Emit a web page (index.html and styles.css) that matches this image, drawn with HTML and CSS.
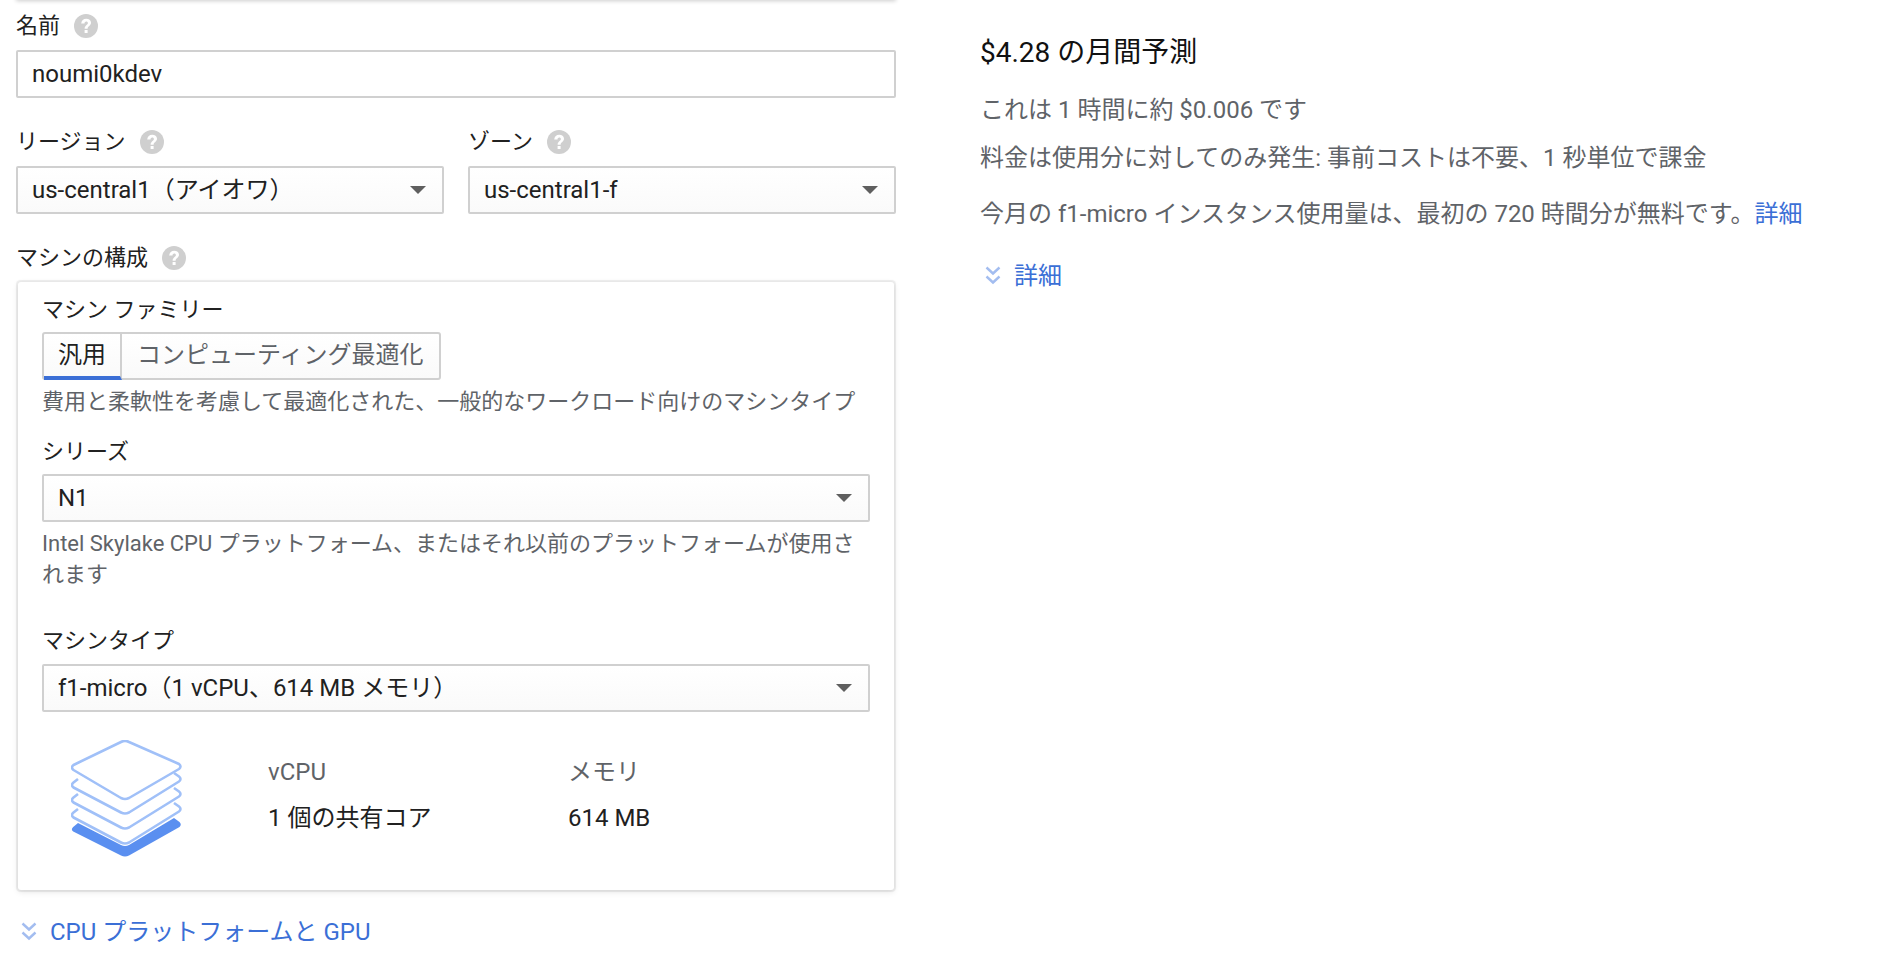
FILE: index.html
```html
<!DOCTYPE html>
<html lang="ja">
<head>
<meta charset="utf-8">
<title>VM</title>
<link rel="stylesheet" href="styles.css">
</head>
<body>
<svg class="defs" width="0" height="0" aria-hidden="true">
  <symbol id="help" viewBox="0 0 24 24">
    <circle cx="12" cy="12" r="12" fill="#cfcfcf"/>
    <path d="M7.200 9.400C7.400 6.500 9.500 4.800 12.200 4.800c2.700 0 4.800 1.600 4.800 4 0 3.100-3.400 3.300-3.400 6h-3c0-3.600 3.300-3.800 3.300-5.800 0-.9-.7-1.500-1.600-1.500-1 0-1.700.7-1.800 1.900z" fill="#fff"/>
    <rect x="10.600" y="16" width="3" height="3" fill="#fff"/>
  </symbol>
  <symbol id="chev" viewBox="0 0 16 20">
    <path d="M1.500 1.500l6.500 6 6.500-6M1.500 10.500l6.500 6 6.500-6" fill="none" stroke="#a3bdf0" stroke-width="2.400"/>
  </symbol>
</svg>
<div class="topline"></div>
<main class="page">
  <section class="left">
    <div class="label first">名前 <svg class="help"><use href="#help"/></svg></div>
    <div class="field">noumi0kdev</div>

    <div class="two">
      <div>
        <div class="label">リージョン <svg class="help"><use href="#help"/></svg></div>
        <div class="select">us-central1（アイオワ）<i class="caret"></i></div>
      </div>
      <div>
        <div class="label">ゾーン <svg class="help"><use href="#help"/></svg></div>
        <div class="select">us-central1-f<i class="caret"></i></div>
      </div>
    </div>

    <div class="label machine">マシンの構成 <svg class="help"><use href="#help"/></svg></div>
    <div class="card">
      <div class="sublabel top">マシン ファミリー</div>
      <div class="tabs">
        <div class="tab active">汎用</div>
        <div class="tab">コンピューティング最適化</div>
      </div>
      <div class="hint">費用と柔軟性を考慮して最適化された、一般的なワークロード向けのマシンタイプ</div>

      <div class="sublabel series">シリーズ</div>
      <div class="select">N1<i class="caret"></i></div>
      <div class="hint">Intel Skylake CPU プラットフォーム、またはそれ以前のプラットフォームが使用されます</div>

      <div class="sublabel mtype">マシンタイプ</div>
      <div class="select">f1-micro（1 vCPU、614 MB メモリ）<i class="caret"></i></div>

      <div class="specs">
        <svg class="stack" viewBox="0 0 112 120" width="112" height="120">
          <path d="M7 83 2.200 87q-2.700 2.800 0 4.500L50 115.500q4 2 8 0L108.500 87q2.500-2.500 0-5L103 78 58 105q-4 2-8 0z" fill="#5a8ff0"/>
          <g fill="none" stroke="#a0c0f8" stroke-width="2.600" stroke-linejoin="round">
            <path d="M7 69 2.500 72.500q-3 2.500 0 5L50 102.500q4 2 8 0L108 71.500q3-2.500 0-5L103 63"/>
            <path d="M7 54 2.500 57.500q-3 2.500 0 5L50 87.500q4 2 8 0L108 56.500q3-2.500 0-5L103 48"/>
            <path d="M7 39 2.500 42.500q-3 2.500 0 5L50 72.500q4 2 8 0L108 41.500q3-2.500 0-5L103 33"/>
            <path class="stack-top" d="M50 2q4-2 8 0L108 24q3 2.500 0 5L58 58q-4 2-8 0L2.500 30q-3-2.500 0-5z"/>
          </g>
        </svg>
        <div class="spec cpu">
          <div class="spec-head">vCPU</div>
          <div class="spec-val">1 個の共有コア</div>
        </div>
        <div class="spec">
          <div class="spec-head">メモリ</div>
          <div class="spec-val">614 MB</div>
        </div>
      </div>
    </div>
    <div class="expander lower"><svg class="chev"><use href="#chev"/></svg><a>CPU プラットフォームと GPU</a></div>
  </section>

  <aside class="right">
    <h2 class="cost">$4.28 の月間予測</h2>
    <p class="line hourly">これは 1 時間に約 $0.006 です</p>
    <p class="line">料金は使用分に対してのみ発生: 事前コストは不要、1 秒単位で課金</p>
    <p class="line free">今月の f1-micro インスタンス使用量は、最初の 720 時間分が無料です。<a>詳細</a></p>
    <div class="expander detail"><svg class="chev"><use href="#chev"/></svg><a>詳細</a></div>
  </aside>
</main>
</body>
</html>
```
FILE: styles.css
```css
* { box-sizing: border-box; }
html, body { margin: 0; padding: 0; height: 966px; overflow: hidden; background: #fff; }
body {
  font-family: Roboto, "Noto Sans CJK JP", sans-serif;
  font-size: 24px;
  color: #212121;
  position: relative;
}
.defs { position: absolute; }
.topline {
  position: absolute; left: 16px; top: -6px; width: 880px; height: 6px;
  box-shadow: 0 1px 4px rgba(0,0,0,.2);
}
.page { display: flex; padding-left: 16px; }
.left { width: 880px; flex: none; }
.right { margin-left: 84px; flex: 1; padding-top: 35px; color: #5f6368; }

.label {
  display: flex; align-items: center; gap: 14px;
  height: 28px; margin-top: 27px; margin-bottom: 10px;
  font-size: 22px; line-height: 28px; color: #212121;
}
.label.first { margin-top: 12px; }
.label.machine { margin-top: 30px; margin-bottom: 11px; }
.help { width: 24px; height: 24px; flex: none; }

.field, .select {
  height: 48px; border: 2px solid #d0d0d0; border-radius: 2px;
  padding: 0 14px; line-height: 45px; background: #fff; color: #212121;
  white-space: nowrap;
}
.select {
  position: relative; background: linear-gradient(#fff, #fafafa);
}
.caret {
  position: absolute; right: 16px; top: 18px; width: 0; height: 0;
  border-left: 8.500px solid transparent; border-right: 8.500px solid transparent;
  border-top: 8.500px solid #5f5f5f;
}
.two { display: grid; grid-template-columns: 428px 428px; gap: 24px; margin-top: 3px; }
.two .label { margin-top: 27px; }

.card {
  margin: -1px 2px 0; height: 608px; padding: 14px 24px 0;
  background: #fff; border-radius: 3px;
  box-shadow: 0 0 1px 1.500px rgba(0,0,0,.07), 0 2px 6px rgba(0,0,0,.1);
}
.sublabel { font-size: 22px; line-height: 28px; color: #212121; }
.top { margin-bottom: 8px; }
.series { margin-top: 21px; margin-bottom: 8px; }
.mtype { margin-top: 37px; margin-bottom: 9px; }

.tabs { display: inline-flex; height: 48px; border: 2px solid #d0d0d0; border-radius: 3px; background: linear-gradient(#fff,#fafafa); vertical-align: top; }
.tab { padding: 0 15px; line-height: 42px; color: #5f6368; }
.tab.active { color: #212121; border-right: 2px solid #d0d0d0; border-bottom: 4px solid #3b6fd6; height: 46px; padding: 0 14px; }
.hint { font-size: 22px; line-height: 31px; color: #5f6368; margin-top: 6px; }

.specs { display: flex; margin-top: 28px; }
.stack { flex: none; margin-left: 29px; }
.stack-top { fill: #fff; }
.spec { width: 300px; padding-top: 18px; }
.cpu { margin-left: 85px; }
.spec-head { line-height: 28px; color: #5f6368; }
.spec-val { line-height: 28px; margin-top: 18px; color: #212121; }

a { color: #3b6fd6; }
.expander { display: flex; align-items: center; gap: 13px; line-height: 30px; }
.chev { width: 16px; height: 20px; flex: none; }
.lower { margin-top: 27px; padding-left: 5px; }

.cost { margin: 0; font-size: 28px; font-weight: 400; line-height: 36px; color: #111; }
.line { margin: 0; line-height: 30px; }
.hourly { margin-top: 24px; }
.line + .line { margin-top: 18px; }
.line.free { margin-top: 26px; }
.detail { margin-top: 32px; padding-left: 5px; }
```
